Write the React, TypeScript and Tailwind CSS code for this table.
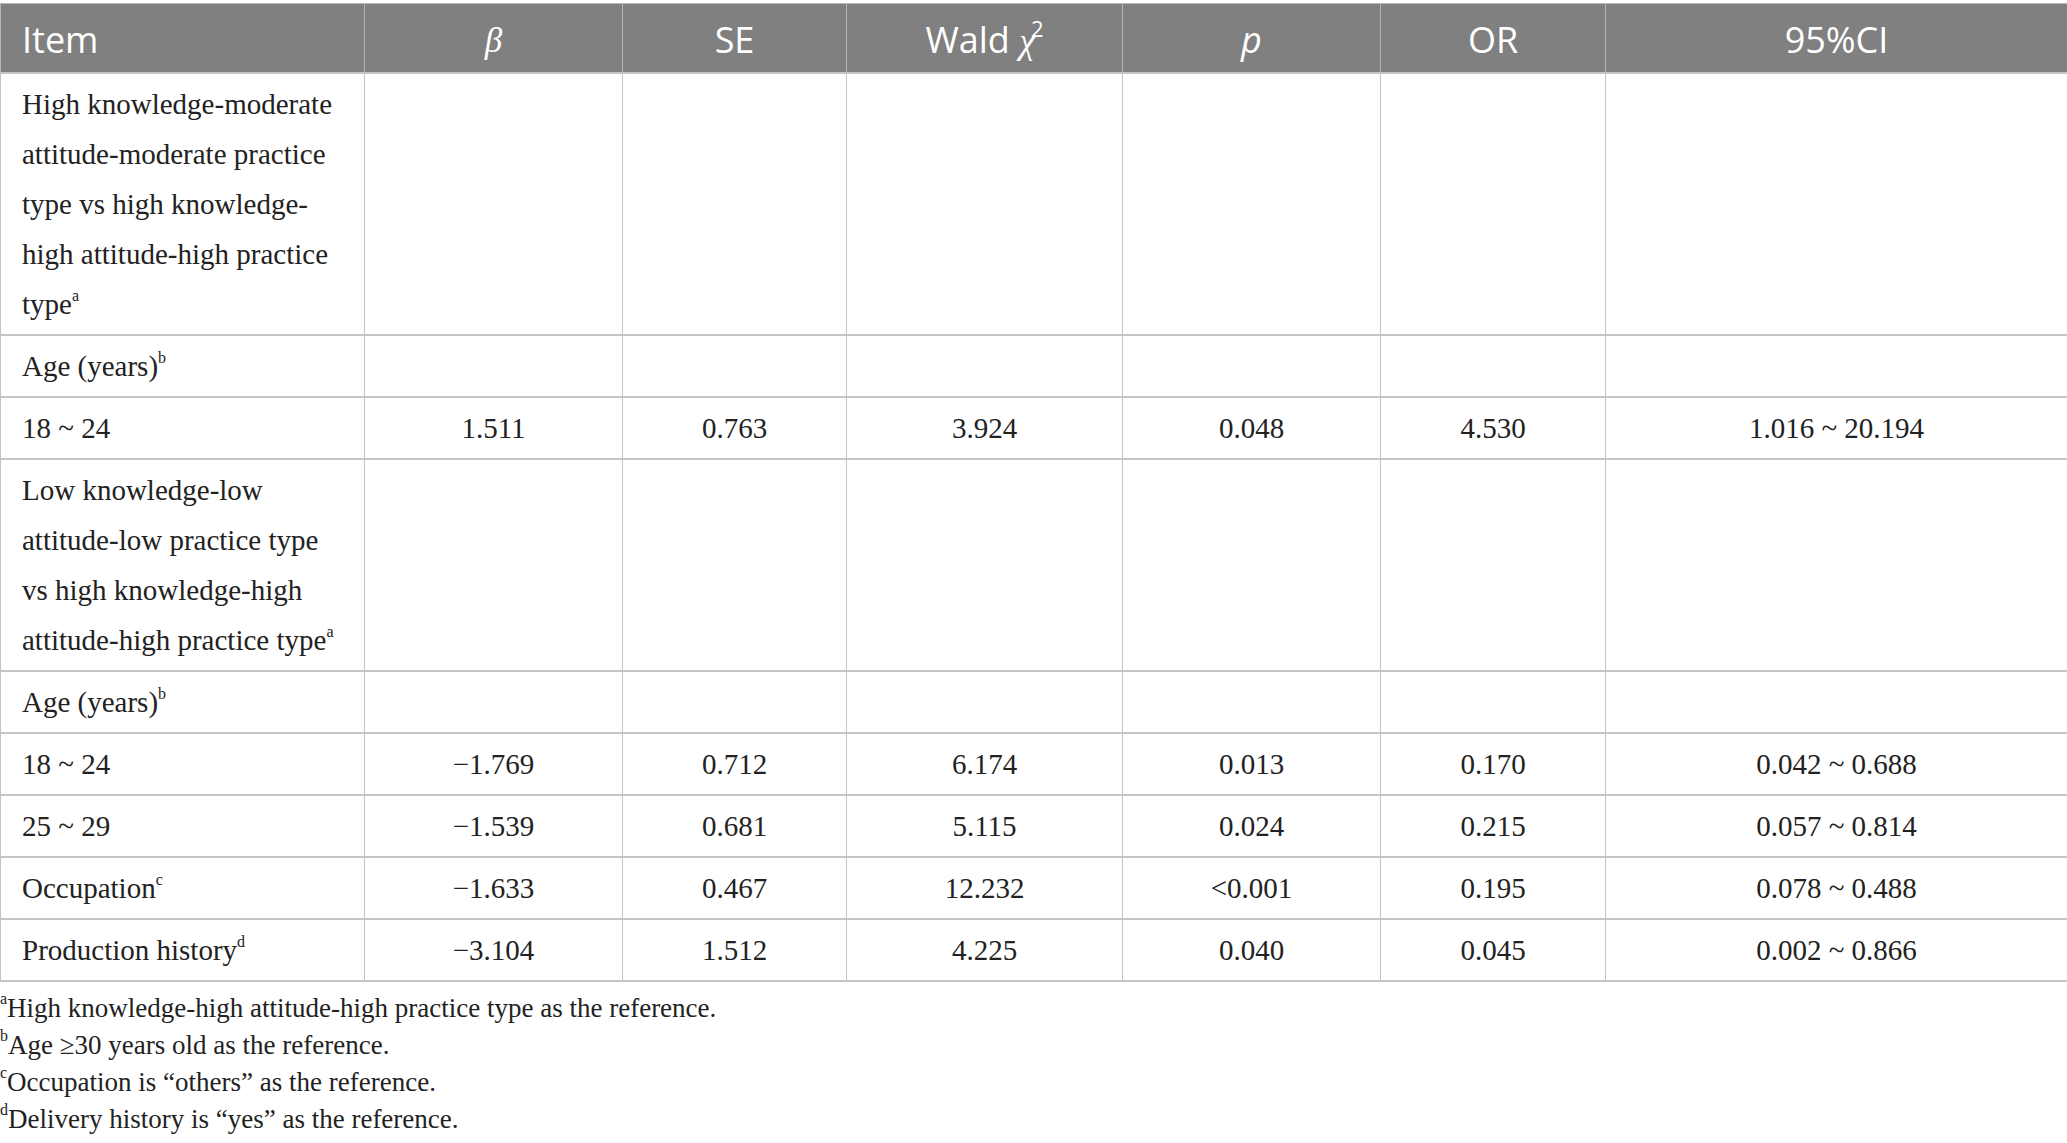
import React from "react";

type Row = {
	label: React.ReactNode;
	values?: string[];
};

const serif = "font-['Liberation_Serif','Times_New_Roman',serif]";
const sans = "font-['Open_Sans','Noto_Sans',sans-serif]";

const Sup = ({ children }: { children: React.ReactNode }) => (
	<sup className="text-[16px] -top-[0.8em]">{children}</sup>
);

const rows: Row[] = [
	{
		label: (
			<>
				High knowledge-moderate
				<br />
				attitude-moderate practice
				<br />
				type vs high knowledge-
				<br />
				high attitude-high practice
				<br />
				type<Sup>a</Sup>
			</>
		),
	},
	{ label: <>Age (years)<Sup>b</Sup></> },
	{ label: "18 ~ 24", values: ["1.511", "0.763", "3.924", "0.048", "4.530", "1.016 ~ 20.194"] },
	{
		label: (
			<>
				Low knowledge-low
				<br />
				attitude-low practice type
				<br />
				vs high knowledge-high
				<br />
				attitude-high practice type<Sup>a</Sup>
			</>
		),
	},
	{ label: <>Age (years)<Sup>b</Sup></> },
	{ label: "18 ~ 24", values: ["\u22121.769", "0.712", "6.174", "0.013", "0.170", "0.042 ~ 0.688"] },
	{ label: "25 ~ 29", values: ["\u22121.539", "0.681", "5.115", "0.024", "0.215", "0.057 ~ 0.814"] },
	{ label: <>Occupation<Sup>c</Sup></>, values: ["\u22121.633", "0.467", "12.232", "<0.001", "0.195", "0.078 ~ 0.488"] },
	{ label: <>Production history<Sup>d</Sup></>, values: ["\u22123.104", "1.512", "4.225", "0.040", "0.045", "0.002 ~ 0.866"] },
];

const colWidths = [364, 258, 224, 276, 258, 225, 462];

export default function App() {
	return (
		<div className="w-[2067px] bg-white pt-[3px]">
			<table className="w-[2067px] table-fixed border-collapse">
				<colgroup>
					{colWidths.map((w, i) => (
						<col key={i} style={{ width: w }} />
					))}
				</colgroup>
				<thead>
					<tr className={`bg-[#7f807f] text-white ${sans} text-[36px] leading-[48px]`}>
						<th className="border border-[#b5b5b5] px-[21px] pt-[11px] pb-[7px] text-left font-normal">Item</th>
						<th className="border border-[#b5b5b5] pt-[11px] pb-[7px] text-center font-normal">
							<span className={`${serif} italic text-[35px]`}>β</span>
						</th>
						<th className="border border-[#b5b5b5] pt-[11px] pb-[7px] text-center font-normal">SE</th>
						<th className="border border-[#b5b5b5] pt-[11px] pb-[7px] text-center font-normal">
							Wald <span className={`${serif} italic`}>χ</span>
							<sup className="text-[22px] -top-[0.7em] -ml-[4px]">2</sup>
						</th>
						<th className="border border-[#b5b5b5] pt-[11px] pb-[7px] text-center font-normal italic">p</th>
						<th className="border border-[#b5b5b5] pt-[11px] pb-[7px] text-center font-normal">OR</th>
						<th className="border border-[#b5b5b5] pt-[11px] pb-[7px] text-center font-normal">95%CI</th>
					</tr>
				</thead>
				<tbody className={`${serif} text-[29px] leading-[50px] text-[#222]`}>
					{rows.map((row, i) => (
						<tr key={i}>
							<td className="whitespace-nowrap border-x border-y-2 border-[#c4c4c4] px-[21px] py-[5px] align-middle">
								{row.label}
							</td>
							{Array.from({ length: 6 }).map((_, j) => (
								<td
									key={j}
									className="border-x border-y-2 border-[#c4c4c4] py-[5px] text-center align-middle"
								>
									{row.values ? row.values[j] : ""}
								</td>
							))}
						</tr>
					))}
				</tbody>
			</table>

			<div className={`${serif} mt-[8px] text-[27px] leading-[37px] text-[#222]`}>
				<p>
					<Sup>a</Sup>High knowledge-high attitude-high practice type as the reference.
				</p>
				<p>
					<Sup>b</Sup>Age ≥30 years old as the reference.
				</p>
				<p>
					<Sup>c</Sup>Occupation is “others” as the reference.
				</p>
				<p>
					<Sup>d</Sup>Delivery history is “yes” as the reference.
				</p>
			</div>
		</div>
	);
}
